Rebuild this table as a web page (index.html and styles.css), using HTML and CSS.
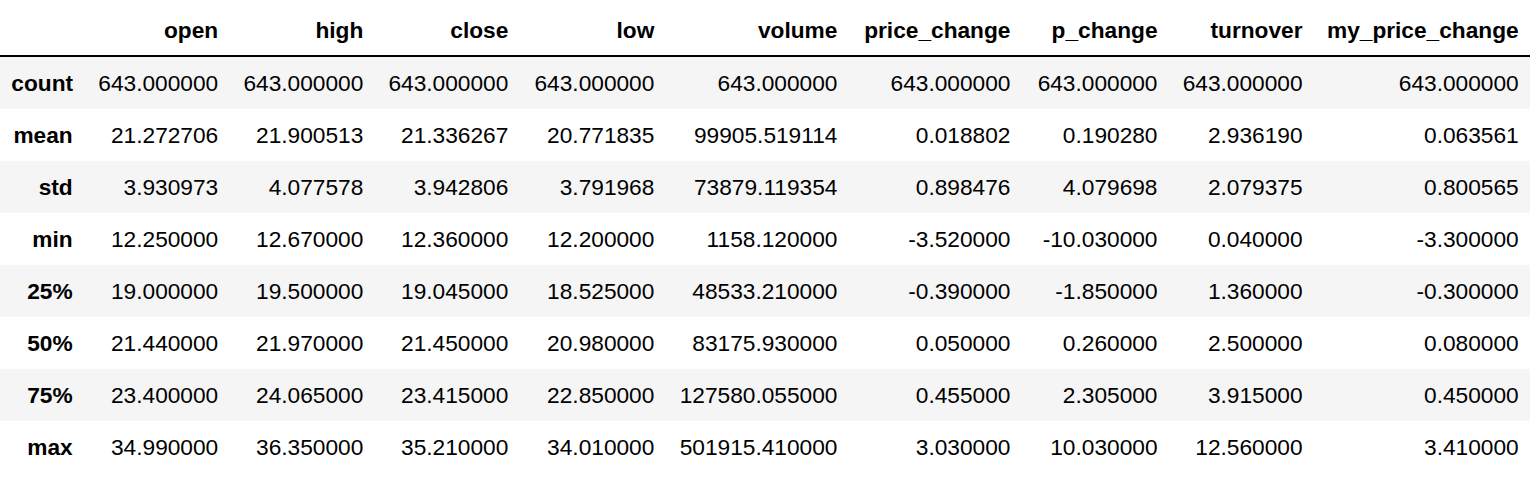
FILE: index.html
```html
<!DOCTYPE html>
<html>
<head>
<meta charset="utf-8">
<link rel="stylesheet" href="styles.css">
</head>
<body>
<table class="df">
  <colgroup>
    <col class="c-idx"><col class="c-open"><col class="c-high"><col class="c-close"><col class="c-low"><col class="c-volume"><col class="c-pc"><col class="c-pch"><col class="c-turn"><col class="c-mpc">
  </colgroup>
  <thead>
    <tr><th></th><th>open</th><th>high</th><th>close</th><th>low</th><th>volume</th><th>price_change</th><th>p_change</th><th>turnover</th><th>my_price_change</th></tr>
  </thead>
  <tbody>
    <tr><th>count</th><td>643.000000</td><td>643.000000</td><td>643.000000</td><td>643.000000</td><td>643.000000</td><td>643.000000</td><td>643.000000</td><td>643.000000</td><td>643.000000</td></tr>
    <tr><th>mean</th><td>21.272706</td><td>21.900513</td><td>21.336267</td><td>20.771835</td><td>99905.519114</td><td>0.018802</td><td>0.190280</td><td>2.936190</td><td>0.063561</td></tr>
    <tr><th>std</th><td>3.930973</td><td>4.077578</td><td>3.942806</td><td>3.791968</td><td>73879.119354</td><td>0.898476</td><td>4.079698</td><td>2.079375</td><td>0.800565</td></tr>
    <tr><th>min</th><td>12.250000</td><td>12.670000</td><td>12.360000</td><td>12.200000</td><td>1158.120000</td><td>-3.520000</td><td>-10.030000</td><td>0.040000</td><td>-3.300000</td></tr>
    <tr><th>25%</th><td>19.000000</td><td>19.500000</td><td>19.045000</td><td>18.525000</td><td>48533.210000</td><td>-0.390000</td><td>-1.850000</td><td>1.360000</td><td>-0.300000</td></tr>
    <tr><th>50%</th><td>21.440000</td><td>21.970000</td><td>21.450000</td><td>20.980000</td><td>83175.930000</td><td>0.050000</td><td>0.260000</td><td>2.500000</td><td>0.080000</td></tr>
    <tr><th>75%</th><td>23.400000</td><td>24.065000</td><td>23.415000</td><td>22.850000</td><td>127580.055000</td><td>0.455000</td><td>2.305000</td><td>3.915000</td><td>0.450000</td></tr>
    <tr><th>max</th><td>34.990000</td><td>36.350000</td><td>35.210000</td><td>34.010000</td><td>501915.410000</td><td>3.030000</td><td>10.030000</td><td>12.560000</td><td>3.410000</td></tr>
  </tbody>
</table>
</body>
</html>
```
FILE: styles.css
```css
html, body {
  margin: 0;
  padding: 0;
  background: #ffffff;
}
body {
  padding-top: 3px;
  font-family: "Liberation Sans", Arial, Helvetica, sans-serif;
  color: #000000;
}
.df {
  border-collapse: collapse;
  border-spacing: 0;
  table-layout: fixed;
  width: 1530px;
  font-size: 22.7px;
}
.c-idx { width: 84px; }
.c-open { width: 145.5px; }
.c-high { width: 145px; }
.c-close { width: 145px; }
.c-low { width: 146px; }
.c-volume { width: 183px; }
.c-pc { width: 173px; }
.c-pch { width: 147px; }
.c-turn { width: 145px; }
.c-mpc { width: 216px; }
.df th, .df td {
  text-align: right;
  vertical-align: middle;
  padding: 13px 11.35px;
  line-height: 26px;
  white-space: nowrap;
  border: none;
}
.df th {
  font-weight: bold;
}
.df td {
  font-weight: normal;
}
.df thead th {
  padding-top: 14px;
  padding-bottom: 12px;
}
.df thead {
  border-bottom: 2px solid #000000;
}
.df tbody tr:nth-child(odd) {
  background: #f5f5f5;
}
```
